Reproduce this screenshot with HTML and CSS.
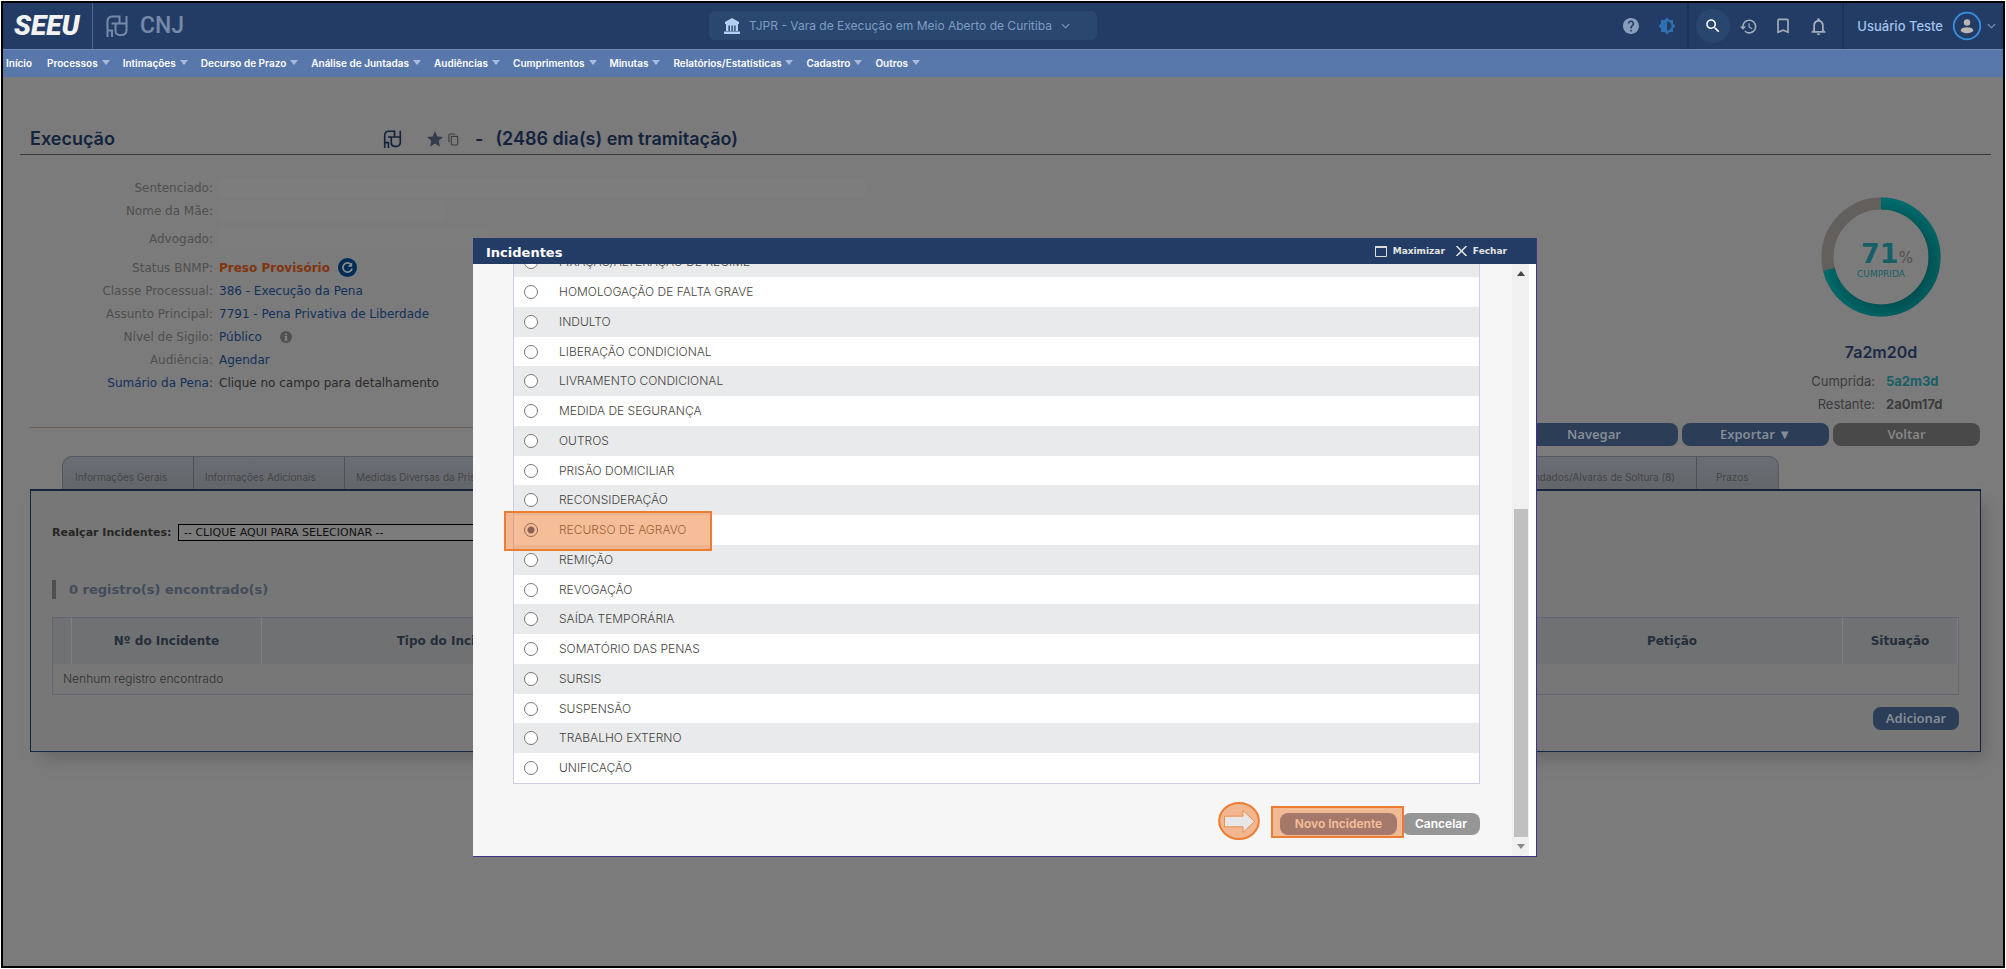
FILE: index.html
```html
<!DOCTYPE html>
<html lang="pt-BR">
<head>
<meta charset="utf-8">
<title>SEEU - Execução</title>
<link rel="stylesheet" href="styles.css">
</head>
<body>
<svg class="sprite" aria-hidden="true">
  <symbol id="pdpj" viewBox="0 0 22 22"><path d="M1.500 22V6a4.500 4.500 0 0 1 4.500-4.500h7.500v7M1.500 15.500H6V22M5.500 8.500h14M9.500 8.500V16a4 4 0 0 0 4 4h2.500a4.500 4.500 0 0 0 4.500-4.500V1" fill="none" stroke="currentColor" stroke-width="2"/></symbol>
  <symbol id="chev" viewBox="0 0 10 6"><path d="M1 1l4 4 4-4" fill="none" stroke="currentColor" stroke-width="1.2"/></symbol>
</svg>
<div class="frame">
  <header class="top">
    <a href="#" class="seeu">SEEU</a>
    <div class="partners">
      <svg class="pdpj" width="22" height="22"><use href="#pdpj"/></svg>
      <span class="cnj">CNJ</span>
    </div>
    <button class="court">
      <svg width="16" height="16" viewBox="0 0 16 16" fill="#b4cff2"><path d="M8 0l7 4v2H1V4zM2 7h2.400v6H2zM6 7h1.400v6H6zM8.800 7h1.400v6H8.800zM11.600 7H14v6h-2.400zM0 13.500h16V16H0z"/><path d="M2 6h12v1.500H2z"/></svg>
      <span>TJPR - Vara de Execução em Meio Aberto de Curitiba</span>
      <svg class="chev" width="9" height="6"><use href="#chev"/></svg>
    </button>
    <div class="tools">
      <button class="tool" aria-label="Ajuda"><svg width="16" height="16" viewBox="2 2 20 20" fill="#8a9dbb"><path d="M12 2C6.480 2 2 6.480 2 12s4.480 10 10 10 10-4.480 10-10S17.520 2 12 2zm1 17h-2v-2h2v2zm2.070-7.750l-.9.920C13.450 12.900 13 13.500 13 15h-2v-.5c0-1.100.45-2.100 1.170-2.830l1.240-1.260c.37-.36.590-.86.590-1.410 0-1.100-.9-2-2-2s-2 .9-2 2H8c0-2.210 1.790-4 4-4s4 1.790 4 4c0 .88-.36 1.680-.93 2.250z"/></svg></button>
      <button class="tool" aria-label="Contraste"><svg width="18" height="18" viewBox="0 0 24 24" fill="#2f6fb4"><path d="M20 8.690V4h-4.690L12 .69 8.690 4H4v4.690L.69 12 4 15.310V20h4.690L12 23.310 15.310 20H20v-4.690L23.310 12 20 8.690zM12 18V6c3.310 0 6 2.690 6 6s-2.690 6-6 6z"/></svg></button>
    </div>
    <div class="tools ruled">
      <button class="tool search" aria-label="Buscar"><svg width="18" height="18" viewBox="0 0 24 24" fill="#fff"><path d="M15.500 14h-.79l-.28-.27C15.410 12.590 16 11.110 16 9.500 16 5.910 13.090 3 9.500 3S3 5.910 3 9.500 5.910 16 9.500 16c1.610 0 3.090-.59 4.230-1.570l.27.28v.79l5 4.990L20.490 19l-4.990-5zm-6 0C7.010 14 5 11.990 5 9.500S7.010 5 9.500 5 14 7.010 14 9.500 11.990 14 9.500 14z"/></svg></button>
      <button class="tool" aria-label="Histórico"><svg width="19" height="19" viewBox="0 0 24 24" fill="#a5acba"><path d="M13 3c-4.970 0-9 4.030-9 9H1l3.890 3.890.07.14L9 12H6c0-3.870 3.130-7 7-7s7 3.130 7 7-3.130 7-7 7c-1.930 0-3.680-.79-4.940-2.060l-1.420 1.420C8.270 19.990 10.510 21 13 21c4.970 0 9-4.030 9-9s-4.030-9-9-9zm-1 5v5l4.280 2.540.72-1.210-3.500-2.080V8H12z"/></svg></button>
      <button class="tool" aria-label="Favoritos"><svg width="20" height="20" viewBox="0 0 24 24" fill="#a5acba"><path d="M17 3H7c-1.100 0-2 .9-2 2v16l7-3 7 3V5c0-1.100-.9-2-2-2zm0 15l-5-2.180L7 18V5h10v13z"/></svg></button>
      <button class="tool" aria-label="Notificações"><svg width="21" height="21" viewBox="0 0 24 24" fill="#a5acba"><path d="M12 22c1.100 0 2-.9 2-2h-4c0 1.100.9 2 2 2zm6-6v-5c0-3.070-1.630-5.640-4.500-6.320V4c0-.83-.67-1.500-1.500-1.500s-1.500.67-1.500 1.500v.68C7.640 5.360 6 7.920 6 11v5l-2 2v1h16v-1l-2-2zm-2 1H8v-6c0-2.480 1.510-4.500 4-4.500s4 2.020 4 4.500v6z"/></svg></button>
    </div>
    <button class="user">
      <span>Usuário Teste</span>
      <svg class="avatar" width="30" height="30" viewBox="0 0 30 30"><circle cx="15" cy="15" r="13.300" fill="#223c66" stroke="#3b8ede" stroke-width="1.800"/><circle cx="15" cy="11.500" r="3.200" fill="#bdb7b4"/><ellipse cx="15" cy="19.200" rx="6.200" ry="3" fill="#bdb7b4"/></svg>
      <svg class="chev" width="9" height="6"><use href="#chev"/></svg>
    </button>
  </header>
  <nav class="menu">
    <a href="#" class="home">Início</a>
    <a href="#" class="drop">Processos</a>
    <a href="#" class="drop">Intimações</a>
    <a href="#" class="drop">Decurso de Prazo</a>
    <a href="#" class="drop">Análise de Juntadas</a>
    <a href="#" class="drop">Audiências</a>
    <a href="#" class="drop">Cumprimentos</a>
    <a href="#" class="drop">Minutas</a>
    <a href="#" class="drop">Relatórios/Estatísticas</a>
    <a href="#" class="drop">Cadastro</a>
    <a href="#" class="drop">Outros</a>
  </nav>
  <main class="page">
    <h1 class="title">
      <span class="title-name">Execução</span>
      <svg class="title-mark" width="19" height="18"><use href="#pdpj"/></svg>
      <svg width="16" height="16" viewBox="0 0 24 24" fill="#343c4d"><path d="M12 0l3.500 8.200 8.500.8-6.400 5.800 1.900 8.700L12 18.900l-7.500 4.600 1.900-8.700L0 9l8.500-.8z"/></svg>
      <svg class="copy" width="11" height="13" viewBox="0 0 12 14" fill="none" stroke="#3c3c3c" stroke-width="1.200"><rect x="3.600" y="3.600" width="7" height="9.400" rx="1"/><path d="M1 10V2a1 1 0 0 1 1-1h6"/></svg>
      <span class="dash">-</span>
      <span>(2486 dia(s) em tramitação)</span>
    </h1>
    <section class="summary">
      <dl class="fields">
        <dt>Sentenciado:</dt><dd><span class="blank blank-long"></span></dd>
        <dt>Nome da Mãe:</dt><dd><span class="blank blank-short"></span></dd>
        <dt>Advogado:</dt><dd><span class="blank blank-mid"></span></dd>
        <dt>Status BNMP:</dt><dd><strong class="status">Preso Provisório</strong><svg width="19" height="19" viewBox="0 0 19 19"><circle cx="9.500" cy="9.500" r="9.500" fill="#012b57"/><path d="M12.800 6.300A4.600 4.600 0 1 0 14 10.500" fill="none" stroke="#8b8b8b" stroke-width="1.700"/><path d="M14.200 4.200v4.600H9.600z" fill="#8b8b8b"/></svg></dd>
        <dt>Classe Processual:</dt><dd><a href="#">386 - Execução da Pena</a></dd>
        <dt>Assunto Principal:</dt><dd><a href="#">7791 - Pena Privativa de Liberdade</a></dd>
        <dt>Nível de Sigilo:</dt><dd><a href="#">Público</a><svg class="info" width="12" height="12" viewBox="0 0 12 12"><circle cx="6" cy="6" r="6" fill="#505050"/><path d="M5 2.500h2v1.500H5zM4.500 5H7v3.500h.8v1H4.300v-1H5V6h-.5z" fill="#848484"/></svg></dd>
        <dt>Audiência:</dt><dd><a href="#">Agendar</a></dd>
        <dt><a href="#">Sumário da Pena:</a></dt><dd>Clique no campo para detalhamento</dd>
      </dl>
      <aside class="sentence">
        <div class="donut">
          <svg width="120" height="120" viewBox="0 0 120 120" fill="none" stroke-width="12">
            <defs>
              <radialGradient id="teal" gradientUnits="userSpaceOnUse" cx="54" cy="66" r="66"><stop offset=".6" stop-color="#004f50"/><stop offset=".95" stop-color="#006b6c"/></radialGradient>
            </defs>
            <circle cx="60" cy="60" r="53.500" stroke="#625f5d"/>
            <circle cx="60" cy="60" r="53.500" stroke="url(#teal)" pathLength="100" stroke-dasharray="71.300 28.700" transform="rotate(-90 60 60)"/>
          </svg>
          <div class="donut-text">
            <div><strong>71</strong><span class="pct">%</span></div>
            <div class="done">CUMPRIDA</div>
          </div>
        </div>
        <strong class="total">7a2m20d</strong>
        <dl class="parts">
          <dt>Cumprida:</dt><dd class="served">5a2m3d</dd>
          <dt>Restante:</dt><dd>2a0m17d</dd>
        </dl>
      </aside>
    </section>
    <div class="actions">
      <hr class="rule">
      <button class="btn btn-nav">Navegar</button>
      <button class="btn">Exportar ▼</button>
      <button class="btn btn-grey">Voltar</button>
    </div>
    <div class="tabs">
      <a href="#" class="tab tab-first">Informações Gerais</a>
      <a href="#" class="tab tab-second">Informações Adicionais</a>
      <a href="#" class="tab tab-wide">Medidas Diversas da Prisão</a>
      <a href="#" class="tab tab-warrants">Mandados/Alvarás de Soltura (8)</a>
      <a href="#" class="tab tab-last">Prazos</a>
    </div>
    <section class="panel">
      <div class="filter">
        <label for="highlight">Realçar Incidentes:</label>
        <select id="highlight"><option>-- CLIQUE AQUI PARA SELECIONAR --</option></select>
      </div>
      <h2 class="count">0 registro(s) encontrado(s)</h2>
      <table class="records">
        <colgroup><col class="c-mark"><col class="c-num"><col class="c-type"><col><col class="c-pet"><col class="c-sit"></colgroup>
        <thead><tr><th></th><th>Nº do Incidente</th><th>Tipo do Incidente</th><th></th><th>Petição</th><th>Situação</th></tr></thead>
        <tbody><tr><td colspan="6">Nenhum registro encontrado</td></tr></tbody>
      </table>
      <div class="panel-foot"><button class="btn btn-small">Adicionar</button></div>
    </section>
  </main>

  <div class="modal" role="dialog" aria-labelledby="modal-title">
    <div class="modal-bar">
      <h2 id="modal-title">Incidentes</h2>
      <button><svg width="12" height="11" viewBox="0 0 12 11"><path d="M.5 1h11v9.500H.5z" fill="none" stroke="#dcdcd6"/><path d="M0 0h12v2H0z" fill="#dcdcd6"/></svg>Maximizar</button>
      <button><svg width="11" height="10" viewBox="0 0 11 10"><path d="M.5 0l10 10M10.500 0l-10 10" stroke="#e6e6e0" stroke-width="1.500"/></svg>Fechar</button>
    </div>
    <div class="modal-body">
      <div class="modal-view">
        <table class="options">
          <tbody>
            <tr><td><label><input type="radio" name="tipo">FIXAÇÃO/ALTERAÇÃO DE REGIME</label></td></tr>
            <tr><td><label><input type="radio" name="tipo">HOMOLOGAÇÃO DE FALTA GRAVE</label></td></tr>
            <tr><td><label><input type="radio" name="tipo">INDULTO</label></td></tr>
            <tr><td><label><input type="radio" name="tipo">LIBERAÇÃO CONDICIONAL</label></td></tr>
            <tr><td><label><input type="radio" name="tipo">LIVRAMENTO CONDICIONAL</label></td></tr>
            <tr><td><label><input type="radio" name="tipo">MEDIDA DE SEGURANÇA</label></td></tr>
            <tr><td><label><input type="radio" name="tipo">OUTROS</label></td></tr>
            <tr><td><label><input type="radio" name="tipo">PRISÃO DOMICILIAR</label></td></tr>
            <tr><td><label><input type="radio" name="tipo">RECONSIDERAÇÃO</label></td></tr>
            <tr><td><label><input type="radio" name="tipo" checked>RECURSO DE AGRAVO</label><span class="mark mark-row"></span></td></tr>
            <tr><td><label><input type="radio" name="tipo">REMIÇÃO</label></td></tr>
            <tr><td><label><input type="radio" name="tipo">REVOGAÇÃO</label></td></tr>
            <tr><td><label><input type="radio" name="tipo">SAÍDA TEMPORÁRIA</label></td></tr>
            <tr><td><label><input type="radio" name="tipo">SOMATÓRIO DAS PENAS</label></td></tr>
            <tr><td><label><input type="radio" name="tipo">SURSIS</label></td></tr>
            <tr><td><label><input type="radio" name="tipo">SUSPENSÃO</label></td></tr>
            <tr><td><label><input type="radio" name="tipo">TRABALHO EXTERNO</label></td></tr>
            <tr><td><label><input type="radio" name="tipo">UNIFICAÇÃO</label></td></tr>
          </tbody>
        </table>
        <div class="modal-foot">
          <svg class="pointer" width="42" height="38" viewBox="0 0 42 38"><ellipse cx="21" cy="19" rx="19.800" ry="17.900" fill="#f2b691" stroke="#ed7d31" stroke-width="2"/><path d="M6.500 14.200H25V8.500L36.500 19.500 25 30.500v-5.700H6.500z" fill="#e7e6e6" stroke="#ed7d31" stroke-width=".8"/></svg>
          <div class="new"><button class="pill">Novo Incidente</button><span class="mark mark-new"></span></div>
          <button class="pill pill-grey">Cancelar</button>
        </div>
      </div>
      <div class="scroll" aria-hidden="true"><i class="up"></i><i class="track"></i><i class="thumb"></i><i class="down"></i></div>
    </div>
  </div>
</div>
</body>
</html>
```
FILE: styles.css
```css
* { box-sizing: border-box; }
body { margin: 0; padding: 1px; background: #fff; font-family: "DejaVu Sans", Verdana, sans-serif; font-size: 12px; }
button { border: 0; padding: 0; background: none; font: inherit; color: inherit; }
a { text-decoration: none; color: inherit; }
dl, dd, h1, h2 { margin: 0; }
svg { flex: none; }
.sprite { position: absolute; width: 0; height: 0; }
.frame { position: relative; min-height: calc(100vh - 2px); border: 2px solid #000; background: #7b7b7b; overflow: hidden; }

/* header */
.top { position: relative; display: flex; height: 46px; background: #223c66; font-family: Inter, sans-serif; }
.seeu { width: 90px; padding-left: 11px; border-right: 1px solid #4b678f; color: #f2f2f2; font: italic 900 28px/46px Roboto, sans-serif; }
.partners { display: flex; align-items: center; gap: 12px; padding-left: 13px; color: #7689a8; flex: 1; }
.cnj { font: 500 23px/44px Roboto, sans-serif; }
.court { position: absolute; left: 45%; top: 8px; transform: translateX(-50%); display: flex; align-items: center; justify-content: center; gap: 9px; width: 388px; height: 29px; padding-right: 12px; border-radius: 6px; background: #29476f; color: #7f9dc2; font-size: 12px; white-space: nowrap; }
.chev { color: #7f9dc2; }
.tools { display: flex; align-items: center; gap: 2px; padding: 0 3px; }
.tool { display: flex; align-items: center; justify-content: center; width: 34px; height: 34px; border-radius: 50%; }
.ruled { gap: 1px; padding: 0 7px; border-left: 2px solid #1b3155; border-right: 2px solid #1b3155; }
.search { background: #29466f; }
.user { display: flex; align-items: center; padding: 0 7px 0 13px; color: #a3c3ec; font-size: 13px; font-weight: 500; }
.avatar { margin: 0 5px 0 9px; }

/* menu */
.menu { display: flex; align-items: center; gap: 13px; height: 28px; padding: 0 0 2px 3px; border-top: 1px solid #6d88b4; background: #5878ac; color: #fff; font: 600 10px/16px Inter, sans-serif; }
.menu a { display: flex; align-items: center; gap: 4px; white-space: nowrap; }
.menu .home { margin-right: 2px; }
.drop::after { content: ""; border: 4px solid transparent; border-top: 5px solid #a9bcdb; border-bottom: 0; }

/* page */
.page { padding: 47px 12px 0 17px; }
.title { display: flex; align-items: center; height: 31px; padding-left: 10px; border-bottom: 1px solid #39393d; color: #14233d; font: 600 18px/30px Inter, sans-serif; }
.title-name { width: 353px; }
.title-mark { margin-right: 25px; }
.copy { margin-left: 5px; }
.dash { margin: 0 12px 0 16px; }
.summary { display: flex; justify-content: space-between; height: 268px; padding: 0 10px; }
.fields { display: grid; grid-template-columns: 183px 1fr; grid-auto-rows: 23px; column-gap: 6px; flex: 1; padding-top: 21px; grid-template-rows: 23px 23px 34px; align-items: center; color: #2a2a2a; }
.fields dt { text-align: right; color: #4f4f4f; }
.fields dd { display: flex; align-items: center; }
.fields a { color: #12305a; }
.status { margin-right: 8px; color: #80340f; }
.info { margin-left: 18px; }
.blank { height: 20px; background: #7d7d7d; }
.blank-long { width: 646px; }
.blank-short { width: 226px; }
.blank-mid { width: 270px; }
.sentence { width: 200px; padding-top: 42px; text-align: center; font-family: Inter, sans-serif; }
.donut { position: relative; height: 120px; margin-bottom: 23px; }
.donut-text { position: absolute; inset: 41px 0 0 12px; color: #175f66; font-family: "DejaVu Sans", sans-serif; }
.donut-text strong { font-size: 27px; line-height: 31px; }
.pct { font-size: 15px; color: #505050; }
.done { margin-right: 12px; font-size: 9px; line-height: 10px; }
.total { display: block; color: #1b2a46; font-size: 16px; line-height: 24px; font-weight: 600; }
.parts { display: grid; grid-template-columns: 94px 1fr; gap: 0 11px; margin-top: 6px; font-size: 13px; line-height: 23px; color: #3b3b3b; }
.parts dt { text-align: right; }
.parts dd { text-align: left; font-weight: 700; }
.parts .served { color: #175f66; }

.actions { display: flex; gap: 4px; padding: 0 11px 0 10px; }
.rule { flex: 1; margin: 4px 0 0; border: 0; border-top: 1px solid #665f4e; }
.btn { width: 147px; height: 23px; border-radius: 8px; background: #2b3d57; color: #858c96; font: 600 13px/23px "Noto Sans", sans-serif; }
.btn-nav { width: 168px; }
.btn-grey { background: #494949; color: #858585; }
.btn-small { width: 86px; }

.tabs { display: flex; height: 33px; margin: 10px 212px 0 42px; border: 1px solid #54585f; border-bottom: 0; border-radius: 10px 10px 0 0; background: linear-gradient(#6a6e74, #63676c); color: #454545; font: 10px/16px Inter, sans-serif; white-space: nowrap; }
.tab { padding-top: 12px; }
.tab + .tab { border-left: 1px solid #4e5157; }
.tab-first { width: 130px; padding-left: 12px; }
.tab-second { width: 151px; padding-left: 11px; }
.tab-wide { flex: 1; padding-left: 11px; }
.tab-warrants { padding-right: 21px; padding-left: 20px; }
.tab-last { width: 82px; padding-left: 19px; }
.panel { margin: 0 10px; padding: 33px 21px 21px; border: 1px solid #14253f; border-top-width: 2px; background: #777; box-shadow: 8px 10px 14px -4px #666; }
.filter { display: flex; align-items: center; height: 17px; color: #262622; font-size: 11px; font-weight: 700; }
.filter label { min-width: 126px; }
.filter select { appearance: none; width: 420px; height: 17px; padding: 0 5px; border: 1px solid #000; border-radius: 0; background: #7b7b7b; color: #111; font: 11px/14px "DejaVu Sans", sans-serif; }
.count { margin: 39px 0 18px; padding-left: 13px; border-left: 4px solid #4f4f4f; color: #434c5b; font-size: 13px; line-height: 19px; }
.records { width: 100%; border-collapse: separate; border-spacing: 0; table-layout: fixed; border: 1px solid #666573; }
.records th { height: 46px; padding: 0; border-right: 1px solid #7e7e7e; background: #707173; color: #252d3b; font-size: 12px; }
.records td { height: 30px; padding: 0 10px; color: #2f2f2c; font: 300 12px/16px Inter, sans-serif; }
.c-mark { width: 19px; }
.c-num { width: 190px; }
.c-type { width: 388px; }
.c-pet { width: 341px; }
.c-sit { width: 115px; }
.panel-foot { display: flex; justify-content: flex-end; margin-top: 12px; }

/* modal */
.modal { position: absolute; top: 235px; left: 4px; right: 0; width: 1064px; max-width: 90%; margin: 0 auto; border: solid #43308a; border-width: 0 1px 1px 0; background: #f6f6f6; }
.modal-bar { display: flex; align-items: center; height: 26px; padding: 0 29px 0 13px; background: #223c66; color: #fff; }
.modal-bar h2 { flex: 1; padding-top: 3px; font-size: 13px; line-height: 16px; }
.modal-bar button { display: flex; align-items: center; gap: 6px; margin-left: 11px; color: #e6e6e0; font-size: 9px; font-weight: 700; }
.modal-body { display: flex; height: 592px; border-right: 7px solid #fff; }
.modal-view { flex: 1; display: flex; flex-direction: column; justify-content: flex-end; padding: 0 32px 16px 40px; overflow: hidden; }
.options { width: 100%; border-collapse: separate; border-spacing: 0; border: 1px solid #cfcce6; background: #fff; color: #44443e; font: 300 12px/16px Inter, sans-serif; }
.options tr { height: 30px; }
.options tr:nth-child(4n) { height: 29px; }
.options tr:nth-child(odd) { background: #e9eaeb; }
.options td { position: relative; padding: 0 10px; }
.options label { display: flex; align-items: center; gap: 21px; }
.options input { width: 14px; height: 14px; margin: 0; appearance: none; border: 1px solid #777; border-radius: 50%; background: #fff; }
.options input:checked { background: radial-gradient(circle, #28456f 0 3px, #fff 4px); border-color: #36517c; }
.mark { position: absolute; border: 2px solid #ed7d31; background: rgba(237, 125, 49, .5); pointer-events: none; z-index: 1; }
.mark-row { left: -10px; top: -4px; width: 208px; height: 40px; }
.modal-foot { display: flex; align-items: flex-end; justify-content: flex-end; margin-top: 18px; }
.pointer { margin-right: 20px; }
.new { position: relative; margin: 0 5px 5px 0; }
.mark-new { inset: -7px -7px -3px -9px; }
.pill { display: block; width: 117px; height: 22px; border-radius: 8px; background: #5b74a6; color: #fff; font: 600 12px/22px Inter, sans-serif; }
.pill-grey { width: 78px; margin-bottom: 5px; background: #969696; }
.scroll { display: flex; flex-direction: column; align-items: center; width: 17px; background: #f0f0f0; }
.up { margin: 7px 0; border: 4px solid transparent; border-bottom: 5px solid #444; border-top: 0; }
.track { flex: 227; }
.thumb { flex: 329; width: 14px; background: #c0c0c0; }
.down { margin: 7px 0; border: 4px solid transparent; border-top: 5px solid #888; border-bottom: 0; }
```
